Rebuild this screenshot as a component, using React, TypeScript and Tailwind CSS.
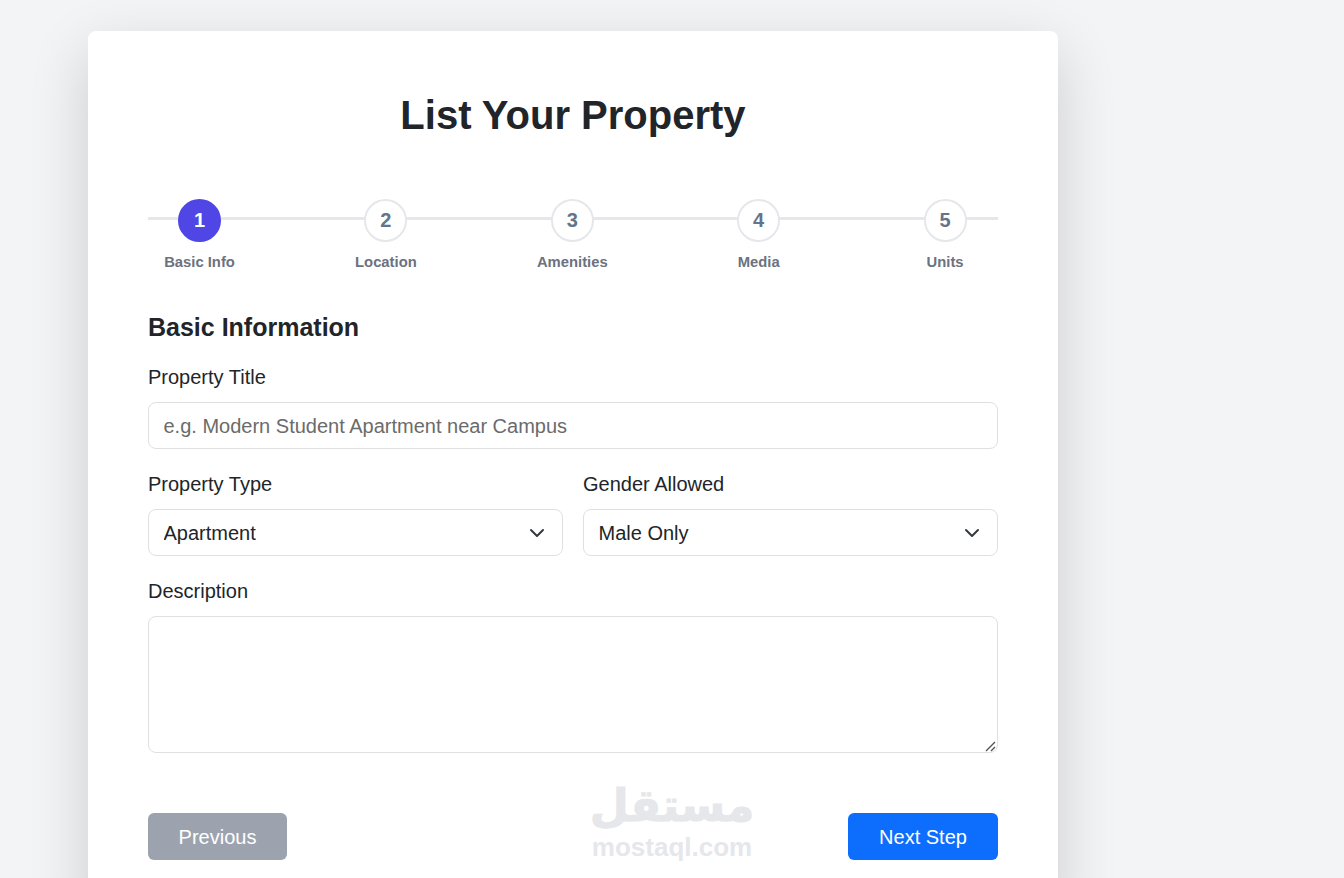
const steps = ['Basic Info', 'Location', 'Amenities', 'Media', 'Units']

function Label({ children }: { children: string }) {
  return <label className="mb-[13px] block text-[20px] leading-[24px] text-[#212529]">{children}</label>
}

function Select({ value, options }: { value: string; options: string[] }) {
  return (
    <div className="relative">
      <select
        defaultValue={value}
        className="h-[47px] w-full appearance-none rounded-lg border border-[#e0e0e0] bg-white px-[14.5px] text-[20px] text-[#212529] outline-none"
      >
        {options.map((o) => (
          <option key={o}>{o}</option>
        ))}
      </select>
      <svg className="pointer-events-none absolute right-[18px] top-[16px] h-4 w-4" viewBox="0 0 16 16" fill="none">
        <path d="m2 5 6 6 6-6" stroke="#343a40" strokeWidth="2" strokeLinecap="round" strokeLinejoin="round" />
      </svg>
    </div>
  )
}

export default function App() {
  return (
    <div className="h-[878px] overflow-hidden bg-[#f3f4f6] pl-[88px] pt-[31px] font-['Liberation_Sans',Arial,sans-serif]">
      <div className="relative w-[970px] rounded-lg bg-white px-[60px] pb-[60px] pt-[60px] shadow-[0_20px_60px_rgba(0,0,0,0.16)]">
        <h1 className="mb-[60px] text-center text-[40px] font-bold leading-[48px] text-[#212529]">List Your Property</h1>

        {/* Stepper */}
        <div className="relative mb-[41px] flex justify-between pr-[1.4px]">
          <div className="absolute left-0 right-0 top-[18px] h-[3px] bg-[#e5e7eb]" />
          {steps.map((label, i) => (
            <div key={label} className="relative flex w-[103px] flex-col items-center">
              <div
                className={`flex h-[43px] w-[43px] items-center justify-center rounded-full border-2 pb-[2px] text-[20px] font-bold ${
                  i === 0 ? 'border-[#4f46e5] bg-[#4f46e5] text-white' : 'border-[#e5e7eb] bg-white text-[#64748b]'
                }`}
              >
                {i + 1}
              </div>
              <span className="mt-[12px] text-[14.8px] font-bold leading-[17px] text-[#6b7280]">{label}</span>
            </div>
          ))}
        </div>

        <h2 className="mb-[23px] text-[25px] font-bold leading-[30px] text-[#212529]">Basic Information</h2>

        <Label>Property Title</Label>
        <input
          placeholder="e.g. Modern Student Apartment near Campus"
          className="mb-[23px] block h-[47px] w-full rounded-lg border border-[#e0e0e0] bg-white px-[14.5px] pt-[2px] text-[20px] text-[#212529] outline-none placeholder:text-[#6b6b6b]"
        />

        <div className="mb-[23px] grid grid-cols-2 gap-5">
          <div>
            <Label>Property Type</Label>
            <Select value="Apartment" options={['Apartment', 'Studio', 'House']} />
          </div>
          <div>
            <Label>Gender Allowed</Label>
            <Select value="Male Only" options={['Male Only', 'Female Only', 'Any']} />
          </div>
        </div>

        <Label>Description</Label>
        <div className="relative mb-[60px]">
          <textarea className="block h-[137px] w-full resize-none rounded-lg border border-[#e0e0e0] bg-white px-[14px] py-2 text-[20px] outline-none" />
          <svg className="pointer-events-none absolute bottom-0 right-[1px] h-3 w-3" viewBox="0 0 12 12" fill="none">
            <path d="M1 10 10 1M6 10l4-4" stroke="#555" strokeWidth="1.4" />
          </svg>
        </div>

        <div className="relative flex justify-between">
          <button className="h-[47px] w-[139px] rounded-md bg-[#9ca3af] text-[20px] text-white">Previous</button>
          <button className="h-[47px] w-[150px] rounded-md bg-[#0d6efd] text-[20px] text-white">Next Step</button>

          {/* watermark */}
          <div className="pointer-events-none absolute left-[442px] top-[-35px] flex w-[164px] flex-col items-center text-[#e5e7eb]">
            <span dir="rtl" className="font-['DejaVu_Sans',sans-serif] text-[45px] font-bold leading-[56px] [-webkit-text-stroke:1px_#e5e7eb]">مستقل</span>
            <span className="text-[26px] font-bold leading-[26px]">mostaql.com</span>
          </div>
        </div>
      </div>
    </div>
  )
}
